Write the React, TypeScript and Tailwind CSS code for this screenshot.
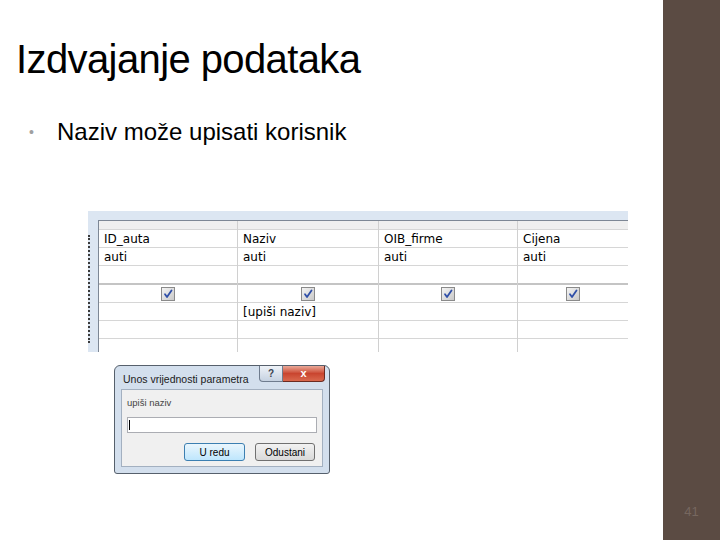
import React from "react";

function Check() {
  return (
    <div className="w-[14px] h-[14px] border border-[#8a8a8a] bg-gradient-to-br from-[#f4f4f4] to-[#c9c9c9] flex items-center justify-center">
      <svg width="10" height="10" viewBox="0 0 10 10">
        <path d="M2 5.2 L4 8 L8.5 1.5" fill="none" stroke="#2f4fa8" strokeWidth="1.8" strokeLinecap="round" strokeLinejoin="round" />
      </svg>
    </div>
  );
}

type Col = { w: string; head: string; table: string; extra?: string };

const cols: Col[] = [
  { w: "w-[139px] border-r", head: "ID_auta", table: "auti" },
  { w: "w-[141px] border-r", head: "Naziv", table: "auti", extra: "[upiši naziv]" },
  { w: "w-[139px] border-r", head: "OIB_firme", table: "auti" },
  { w: "flex-1", head: "Cijena", table: "auti" },
];

function Column({ c }: { c: Col }) {
  const row = "h-[18px] shrink-0 border-b border-[#d6d6d6] flex items-center pl-[5px]";
  return (
    <div className={`${c.w} border-[#d0d0d0] flex flex-col`}>
      <div className="h-[9px] shrink-0 bg-[#efefef] border-b border-[#d6d6d6]" />
      <div className={row}>{c.head}</div>
      <div className={row}>{c.table}</div>
      <div className="h-[19px] shrink-0 border-b-2 border-[#c4c4c4]" />
      <div className="h-[18px] shrink-0 border-b border-[#d6d6d6] flex items-center justify-center">
        <Check />
      </div>
      <div className={row}>{c.extra ?? ""}</div>
      <div className={row} />
      <div className="flex-1" />
    </div>
  );
}

export default function App() {
  return (
    <div className="w-[720px] h-[540px] flex bg-white overflow-hidden" style={{ fontFamily: '"Liberation Sans", Arial, sans-serif' }}>
      <div className="w-[663px] flex flex-col">
        <div className="pl-[16px] pt-[36px] text-[40px] leading-[46px] tracking-[-0.6px] text-black">
          Izdvajanje podataka
        </div>
        <div className="mt-[36px] flex items-center pl-[29px] h-[28px]">
          <span className="w-[28px] text-[14px] text-[#a0a0a0] leading-none">•</span>
          <span className="text-[24px] leading-[28px] text-black">Naziv može upisati korisnik</span>
        </div>

        <div className="ml-[88px] mt-[65px] w-[540px] h-[141px] bg-[#dce6f2] flex flex-col overflow-hidden">
          <div className="h-[9px] shrink-0" />
          <div className="flex flex-1 min-h-0">
            <div className="w-[10px] shrink-0">
              <div className="mt-[15px] h-[108px] border-l-2 border-dotted border-[#3a3a3a]" />
            </div>
            <div
              className="flex-1 bg-white border-l border-t border-[#7d8795] flex text-[12px] text-black"
              style={{ fontFamily: '"DejaVu Sans", Verdana, sans-serif' }}
            >
              {cols.map((c) => (
                <Column key={c.head} c={c} />
              ))}
            </div>
          </div>
        </div>

        <div className="ml-[114px] mt-[13px] w-[216px] h-[109px] rounded-t-[6px] rounded-b-[3px] border border-[#56606c] bg-[#d3dfed] flex flex-col px-[6px] pb-[6px]">
          <div className="h-[23px] shrink-0 flex items-start justify-between">
            <span className="pt-[6px] pl-[2px] text-[10.5px] text-[#1a1a1a]">Unos vrijednosti parametra</span>
            <div className="flex mr-[-2px]">
              <div className="w-[24px] h-[16px] rounded-bl-[4px] border border-t-0 border-[#6f7c8e] bg-gradient-to-b from-[#eef2f7] to-[#c6d2e1] flex items-center justify-center text-[10px] font-bold text-[#3a4250]">
                ?
              </div>
              <div className="w-[42px] h-[16px] rounded-br-[4px] border border-t-0 border-l-0 border-[#6b2b22] bg-gradient-to-b from-[#e9a898] via-[#c9452f] to-[#d9684d] flex items-center justify-center text-[11px] font-bold text-white leading-none">
                x
              </div>
            </div>
          </div>
          <div className="flex-1 bg-[#f0f0f0] border border-[#a3b0c0] flex flex-col px-[5px]">
            <div className="pt-[7px] text-[9.5px] text-[#444] leading-[12px]">upiši naziv</div>
            <div className="mt-[8px] h-[16px] bg-white border border-[#abadb3] flex items-center pl-[1px]">
              <div className="w-px h-[10px] bg-black" />
            </div>
            <div className="mt-[10px] flex justify-end gap-[10px] pr-[2px] text-[10px] text-black">
              <div className="w-[61px] h-[18px] rounded-[3px] border border-[#3c7fb1] bg-gradient-to-b from-[#eaf6fd] to-[#bee6fd] flex items-center justify-center">
                U redu
              </div>
              <div className="w-[60px] h-[18px] rounded-[3px] border border-[#707070] bg-gradient-to-b from-[#f2f2f2] to-[#d9d9d9] flex items-center justify-center">
                Odustani
              </div>
            </div>
          </div>
        </div>
      </div>
      <div className="flex-1 bg-[#5b4b43] flex flex-col justify-end items-center pb-[20px]">
        <span className="text-[13px] leading-[16px] text-[#76675f]">41</span>
      </div>
    </div>
  );
}
